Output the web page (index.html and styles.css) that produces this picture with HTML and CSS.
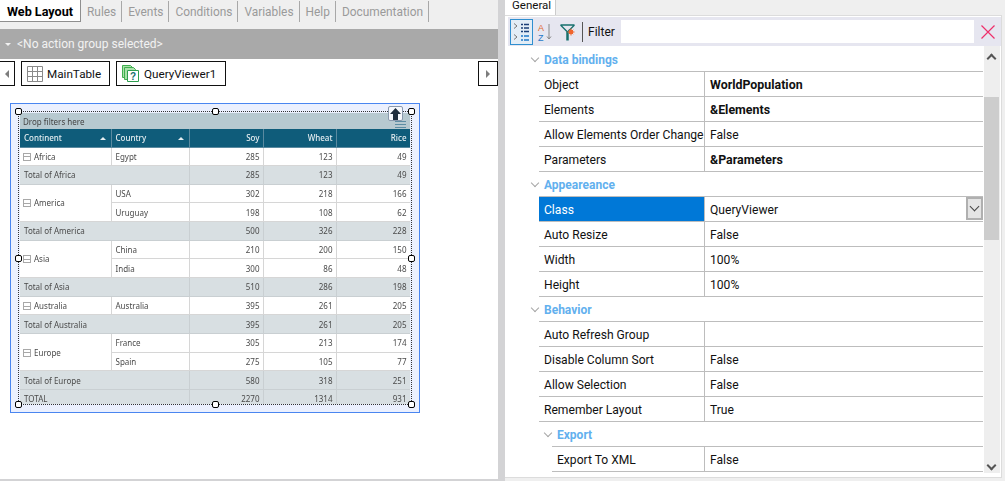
FILE: index.html
```html
<!DOCTYPE html>
<html>
  <head>
    <meta charset="utf-8">
    <title>Web Layout</title>
    <link rel="stylesheet" href="styles.css">
  </head>
  <body>
    <div class="app">
      <div class="left">
        <div class="tabs">
          <span class="tab active">Web Layout</span>
          <span class="tab">Rules</span>
          <span class="tab">Events</span>
          <span class="tab">Conditions</span>
          <span class="tab">Variables</span>
          <span class="tab">Help</span>
          <span class="tab">Documentation</span>
        </div>
        <div class="action-bar"><i class="down-tri"></i>&lt;No action group selected&gt;</div>
        <div class="strip">
          <span class="crumb nav"><i class="tri-left"></i></span>
          <span class="crumb main">
            <svg width="16" height="16" viewBox="0 0 16 16"><path d="M.5.5h15v15H.5zM5.500.5v15M10.500.5v15M.5 5.500h15M.5 10.500h15" fill="#fff" stroke="#8a8a8a"/></svg>
            MainTable
          </span>
          <span class="crumb viewer">
            <svg width="17" height="17" viewBox="0 0 17 17"><path d="M.5.5h8l2 2v10H.5z" fill="#a9e2a9" stroke="#3fae4f"/><path d="M2.500 2.500h9l2 2v10h-11z" fill="#a9e2a9" stroke="#3fae4f"/><path d="M5.500 5.500h11v11h-11z" fill="#fff" stroke="#2e9e4f"/><text x="11" y="15" class="qmark">?</text></svg>
            QueryViewer1
          </span>
          <span class="crumb nav next"><i class="tri-right"></i></span>
        </div>
        <div class="frame">
          <div class="dotted">
            <div class="pivot">
              <div class="drop">Drop filters here</div>
              <table>
                <colgroup><col class="c1"><col class="c2"><col class="c3"><col class="c4"><col class="c5"></colgroup>
                <tr class="head"><th>Continent<i class="sort"></i></th><th>Country<i class="sort"></i></th><th class="n">Soy</th><th class="n">Wheat</th><th class="n">Rice</th></tr>
                <tr><td><i class="minus"></i>Africa</td><td>Egypt</td><td class="n">285</td><td class="n">123</td><td class="n">49</td></tr>
                <tr class="total"><td colspan="2">Total of Africa</td><td class="n">285</td><td class="n">123</td><td class="n">49</td></tr>
                <tr><td rowspan="2"><i class="minus"></i>America</td><td>USA</td><td class="n">302</td><td class="n">218</td><td class="n">166</td></tr>
                <tr><td>Uruguay</td><td class="n">198</td><td class="n">108</td><td class="n">62</td></tr>
                <tr class="total"><td colspan="2">Total of America</td><td class="n">500</td><td class="n">326</td><td class="n">228</td></tr>
                <tr><td rowspan="2"><i class="minus"></i>Asia</td><td>China</td><td class="n">210</td><td class="n">200</td><td class="n">150</td></tr>
                <tr><td>India</td><td class="n">300</td><td class="n">86</td><td class="n">48</td></tr>
                <tr class="total"><td colspan="2">Total of Asia</td><td class="n">510</td><td class="n">286</td><td class="n">198</td></tr>
                <tr><td><i class="minus"></i>Australia</td><td>Australia</td><td class="n">395</td><td class="n">261</td><td class="n">205</td></tr>
                <tr class="total"><td colspan="2">Total of Australia</td><td class="n">395</td><td class="n">261</td><td class="n">205</td></tr>
                <tr><td rowspan="2"><i class="minus"></i>Europe</td><td>France</td><td class="n">305</td><td class="n">213</td><td class="n">174</td></tr>
                <tr><td>Spain</td><td class="n">275</td><td class="n">105</td><td class="n">77</td></tr>
                <tr class="total"><td colspan="2">Total of Europe</td><td class="n">580</td><td class="n">318</td><td class="n">251</td></tr>
                <tr class="total"><td colspan="2">TOTAL</td><td class="n">2270</td><td class="n">1314</td><td class="n">931</td></tr>
              </table>
            </div>
            <i class="handle h-tl"></i><i class="handle h-tc"></i><i class="handle h-tr"></i>
            <i class="handle h-ml"></i><i class="handle h-mr"></i>
            <i class="handle h-bl"></i><i class="handle h-bc"></i><i class="handle h-br"></i>
            <span class="menu-lines"></span>
            <span class="up-btn">
              <svg width="11" height="12" viewBox="0 0 11 12"><path d="M5.500 0L11 6H8v6H3V6H0z" fill="#1f2d3d"/></svg>
            </span>
          </div>
        </div>
      </div>
      <div class="splitter"></div>
      <div class="right">
        <div class="right-tabs"><span class="general">General</span></div>
        <div class="panel">
          <div class="toolbar">
            <span class="tool on">
              <svg width="19" height="20" viewBox="0 0 19 20"><path d="M2 1.500l3 2.500-3 2.500M2 12.500l3 2.500-3 2.500" fill="none" stroke="#777"/><path d="M9 2.500h8M9 6h8M9 9.500h8" stroke="#1b3f77" stroke-width="1.500" stroke-dasharray="2 1 5"/><path d="M9 14h8M9 18h8" stroke="#1f78c8" stroke-width="1.500" stroke-dasharray="2 1 5"/></svg>
            </span>
            <span class="tool az">
              <svg width="16" height="22" viewBox="0 0 16 22"><text x="1" y="10" class="az-a">A</text><text x="1" y="20" class="az-z">Z</text><path d="M12 3v15M10 15.500l2 2.500 2-2.500" fill="none" stroke="#888"/></svg>
            </span>
            <span class="tool funnel">
              <svg width="17" height="20" viewBox="0 0 17 20"><path d="M1.500 3h14M1.500 3l7 7 7-7" fill="none" stroke="#17706e" stroke-width="1.300"/><path d="M8.500 10v8.500" stroke="#17706e" stroke-width="2.500"/><path d="M12 6.500v7M8.500 10h7M9.800 7.800l4.400 4.400M14.200 7.800l-4.400 4.400" stroke="#f0642d"/><circle cx="12" cy="10" r="2.200" fill="#f0642d"/></svg>
            </span>
            <span class="sep"></span>
            <span class="filter-label">Filter</span>
            <span class="filter-input"></span>
            <span class="clear">
              <svg width="14" height="14" viewBox="0 0 14 14"><path d="M.5.5l13 13M13.500.5l-13 13" stroke="#ee2f6b" stroke-width="1.200"/></svg>
            </span>
          </div>
          <div class="grid-area">
            <div class="props">
              <div class="grp"><i class="chev"></i>Data bindings</div>
              <div class="prop"><span class="k">Object</span><span class="v b">WorldPopulation</span></div>
              <div class="prop"><span class="k">Elements</span><span class="v b">&amp;Elements</span></div>
              <div class="prop"><span class="k">Allow Elements Order Change</span><span class="v">False</span></div>
              <div class="prop"><span class="k">Parameters</span><span class="v b">&amp;Parameters</span></div>
              <div class="grp"><i class="chev"></i>Appeareance</div>
              <div class="prop sel"><span class="k">Class</span><span class="v">QueryViewer<span class="combo"><i class="chev dark"></i></span></span></div>
              <div class="prop"><span class="k">Auto Resize</span><span class="v">False</span></div>
              <div class="prop"><span class="k">Width</span><span class="v">100%</span></div>
              <div class="prop"><span class="k">Height</span><span class="v">100%</span></div>
              <div class="grp"><i class="chev"></i>Behavior</div>
              <div class="prop"><span class="k">Auto Refresh Group</span><span class="v"></span></div>
              <div class="prop"><span class="k">Disable Column Sort</span><span class="v">False</span></div>
              <div class="prop"><span class="k">Allow Selection</span><span class="v">False</span></div>
              <div class="prop"><span class="k">Remember Layout</span><span class="v">True</span></div>
              <div class="sub">
                <div class="grp"><i class="chev"></i>Export</div>
                <div class="prop"><span class="k">Export To XML</span><span class="v">False</span></div>
              </div>
            </div>
            <div class="scroll">
              <i class="chev up"></i>
              <div class="thumb"></div>
              <i class="chev last"></i>
            </div>
          </div>
        </div>
      </div>
    </div>
  </body>
</html>
```

FILE: styles.css
```css
html, body {
  margin: 0;
  padding: 0;
  height: 100%;
  overflow: hidden;
}

body {
  font-family: "Roboto", "Liberation Sans", sans-serif;
  font-size: 12.1px;
  color: #111;
  background: #fff;
}

i {
  display: block;
}

.app {
  display: flex;
  width: 1005px;
  height: 481px;
}

/* left side */
.left {
  width: 498px;
  height: 481px;
  box-sizing: border-box;
  border-bottom: 2px solid #d3d3d5;
  overflow: hidden;
}

.tabs {
  display: flex;
  height: 29px;
  box-sizing: border-box;
  background: #efefef;
}

.tab {
  height: 21px;
  line-height: 22px;
  padding: 0 5px 0 6px;
  font-size: 11.9px;
  color: #9a9a9a;
  border-right: 1px solid #a8a8a8;
  margin-top: 1px;
}

.tab.active {
  width: 81px;
  box-sizing: border-box;
  height: 22px;
  margin-top: 0;
  padding: 1px 0 0 7px;
  background: #fff;
  color: #000;
  font-size: 12.6px;
  font-weight: 700;
  border: 1px solid #8f8f8f;
  border-width: 0 1px 1px 0;
}

.action-bar {
  display: flex;
  align-items: center;
  height: 30px;
  box-sizing: border-box;
  padding-bottom: 1px;
  background: #a9a9a9;
  color: #f2f2f2;
  font-size: 12px;
}

.down-tri {
  width: 0;
  height: 0;
  margin: 1px 6px 0 5px;
  border: 3px solid transparent;
  border-top: 3px solid #f2f2f2;
  border-bottom: 0;
}

.strip {
  display: flex;
  gap: 6px;
  height: 28px;
  box-sizing: border-box;
  padding-top: 2px;
}

.crumb {
  display: flex;
  align-items: center;
  gap: 4px;
  height: 25px;
  box-sizing: border-box;
  border: 1px solid #111;
  font-size: 11.7px;
  color: #111;
}

.crumb.nav {
  width: 15px;
  justify-content: center;
  border-left: 0;
}

.crumb.next {
  width: 20px;
  margin-left: auto;
  border-left: 1px solid #111;
}

.crumb.main {
  width: 89px;
  padding-left: 5px;
}

.crumb.viewer {
  width: 110px;
  padding-left: 5px;
  gap: 5px;
}

.qmark {
  font: bold 10px "Liberation Sans", sans-serif;
  fill: #14706e;
  text-anchor: middle;
}

.tri-left, .tri-right {
  width: 0;
  height: 0;
  border: 4px solid transparent;
}

.tri-left {
  border-left: 0;
  border-right: 4px solid #7d7d7d;
}

.tri-right {
  border-right: 0;
  border-left: 4px solid #7d7d7d;
}

/* selected control on the form */
.frame {
  width: 410px;
  height: 310px;
  box-sizing: border-box;
  margin: 16px 0 0 10px;
  padding: 7px 7px 0 7px;
  border: 1px solid #4a86f0;
  background: #ebf0fe;
}

.dotted {
  position: relative;
  width: 394px;
  height: 294px;
  box-sizing: border-box;
  padding: 1px 1px 0 1px;
  border: 1px dotted #333;
}

.pivot {
  width: 390px;
  height: 291px;
  overflow: hidden;
  font-family: "Noto Sans", sans-serif;
  font-size: 8px;
  color: #4a4a4a;
  filter: blur(0.25px);
}

.drop {
  height: 16px;
  line-height: 17px;
  padding-left: 3px;
  background: #b7c9d0;
  color: #444;
}

.pivot table {
  width: 390px;
  table-layout: fixed;
  border-collapse: collapse;
  background: #fff;
}

.c1 { width: 91px; }
.c2 { width: 78px; }
.c3 { width: 74px; }
.c4 { width: 73px; }
.c5 { width: 74px; }

.pivot th, .pivot td {
  height: 18.67px;
  padding: 0 3px 0 4px;
  box-sizing: border-box;
  border: 1px solid #d6d6d6;
  border-width: 0 1px 1px 0;
  font-weight: 400;
  text-align: left;
  white-space: nowrap;
}

.pivot th {
  position: relative;
  height: 18px;
  background: #0f5c7a;
  color: #e6eef1;
  font-weight: 500;
  border-color: #5a8aa0;
}

.pivot .n {
  text-align: right;
}

.pivot .total td {
  background: #d8dfe2;
  border-color: #c9cfd2;
}

.sort {
  position: absolute;
  right: 5px;
  top: 8px;
  width: 0;
  height: 0;
  border: 3px solid transparent;
  border-bottom: 3px solid #e6eef1;
  border-top: 0;
}

.minus {
  display: inline-block;
  width: 6px;
  height: 6px;
  margin: 0 3px 0 -1px;
  border: 1px solid #a8a8a8;
  vertical-align: -1px;
  background: linear-gradient(#a8a8a8, #a8a8a8) center / 100% 1px no-repeat;
}

.handle {
  position: absolute;
  width: 7px;
  height: 7px;
  box-sizing: border-box;
  border: 1px solid #000;
  border-radius: 2px;
  background: #fff;
}

.h-tl { left: -4px; top: -4px; }
.h-tc { left: 193px; top: -4px; }
.h-tr { left: 389px; top: -4px; }
.h-ml { left: -4px; top: 143px; }
.h-mr { left: 389px; top: 143px; }
.h-bl { left: -4px; top: 289px; }
.h-bc { left: 193px; top: 289px; }
.h-br { left: 389px; top: 289px; }

.up-btn {
  position: absolute;
  left: 369px;
  top: -6px;
  display: flex;
  align-items: center;
  justify-content: center;
  width: 15px;
  height: 15px;
  box-sizing: border-box;
  border: 1px solid #8a99ad;
  border-radius: 2px;
  background: #f6f8fc;
}

.menu-lines {
  position: absolute;
  left: 376px;
  top: 9px;
  width: 11px;
  height: 5px;
  border-top: 1px solid #5e8da3;
  border-bottom: 1px solid #5e8da3;
  background: linear-gradient(#5e8da3, #5e8da3) center / 100% 1px no-repeat;
}

.splitter {
  width: 7px;
  background: #d3d3d5;
}

/* properties */
.right {
  width: 500px;
  height: 481px;
  background: #efefef;
}

.right-tabs {
  height: 15px;
  background: #efefef;
}

.general {
  display: block;
  width: 51px;
  height: 15px;
  padding-left: 7px;
  box-sizing: border-box;
  line-height: 11px;
  font-size: 11.5px;
  background: #fff;
  border-right: 1px solid #ccc;
}

.panel {
  width: 497px;
  height: 463px;
  box-sizing: border-box;
  padding: 1px 0 0 3px;
  border: 1px solid #dcdcdc;
  border-left: 0;
  background: #fff;
}

.toolbar {
  display: flex;
  align-items: center;
  height: 29px;
  background: #e6e6f0;
}

.tool {
  display: flex;
  align-items: center;
  justify-content: center;
  height: 26px;
  box-sizing: border-box;
}

.tool.on {
  width: 23px;
  margin-left: 2px;
  border: 1px solid #2f8fd0;
  background: #e3edf6;
}

.tool.az {
  width: 16px;
  margin-left: 4px;
}

.tool.funnel {
  width: 17px;
  margin-left: 6px;
}

.sep {
  width: 1px;
  height: 20px;
  margin: 0 5px 0 6px;
  background: #555;
}

.filter-label {
  width: 33px;
  font-size: 12px;
}

.filter-input {
  width: 353px;
  height: 23px;
  background: #fff;
}

.clear {
  display: flex;
  margin-left: 7px;
}

.az-a, .az-z {
  font: 9px "Liberation Sans", sans-serif;
}

.az-a { fill: #e0662c; }
.az-z { fill: #1f78c8; }

.grid-area {
  display: flex;
  height: 427px;
}

.props {
  width: 475px;
  flex: none;
  padding-top: 1px;
}

.grp {
  display: flex;
  align-items: center;
  height: 25px;
  box-sizing: border-box;
  margin-left: 31px;
  padding: 1px 0 0 5px;
  border-bottom: 1px solid #bdbdbd;
  color: #62b0ee;
  font-size: 12px;
  font-weight: 700;
}

.prop {
  display: flex;
  height: 25px;
  line-height: 26px;
  box-sizing: border-box;
  margin-left: 31px;
  border-bottom: 1px solid #bdbdbd;
}

.k {
  width: 166px;
  flex: none;
  box-sizing: border-box;
  padding-left: 5px;
  border-right: 1px solid #bdbdbd;
  white-space: nowrap;
}

.v {
  position: relative;
  flex: 1;
  padding-left: 5px;
}

.b {
  font-size: 12.4px;
  font-weight: 700;
}

.sel .k {
  background: #0078d7;
  color: #fff;
}

.combo {
  position: absolute;
  right: 0;
  top: 0;
  display: flex;
  align-items: center;
  justify-content: center;
  width: 17px;
  height: 23px;
  box-sizing: border-box;
  border: 2px solid #b0b0b0;
  background: #e4e4e4;
}

.chev {
  width: 5px;
  height: 5px;
  margin: -4px 6px 0 -12px;
  border: 1px solid #a6a6a6;
  border-width: 0 1px 1px 0;
  transform: rotate(45deg);
  flex: none;
}

.chev.dark {
  width: 6px;
  height: 6px;
  margin: -4px 0 0;
  border-color: #444;
}

.sub .grp, .sub .prop {
  margin-left: 44px;
}

.sub .k {
  width: 153px;
}

.scroll {
  position: relative;
  width: 16px;
  height: 427px;
  margin-left: 1px;
  background: #eee;
}

.thumb {
  position: absolute;
  left: 0;
  top: 51px;
  width: 15px;
  height: 143px;
  background: #cdcdcd;
}

.scroll .chev {
  position: absolute;
  left: 4px;
  margin: 0;
  border-color: #555;
  border-width: 0 2px 2px 0;
}

.scroll .up {
  top: 9px;
  transform: rotate(225deg);
}

.scroll .last {
  top: 416px;
}
```
